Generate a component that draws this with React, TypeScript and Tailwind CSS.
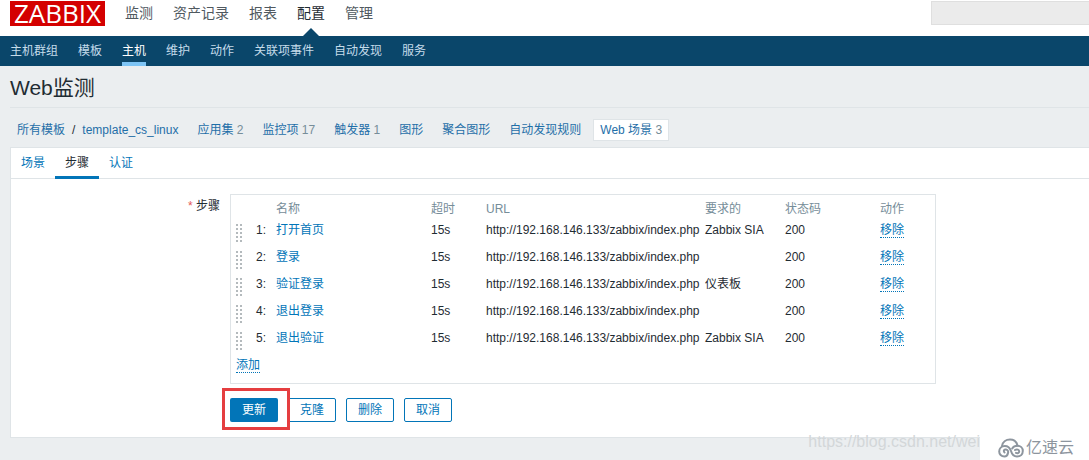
import React, { useState } from 'react';

const mainMenu = ['监测', '资产记录', '报表', '配置', '管理'];
const subMenu = ['主机群组', '模板', '主机', '维护', '动作', '关联项事件', '自动发现', '服务'];

const objectLinks = [
  { name: '应用集', count: 2 },
  { name: '监控项', count: 17 },
  { name: '触发器', count: 1 },
  { name: '图形' },
  { name: '聚合图形' },
  { name: '自动发现规则' },
  { name: 'Web 场景', count: 3 },
];

const tabs = ['场景', '步骤', '认证'];

const initialSteps = [
  { id: 1, name: '打开首页', required: 'Zabbix SIA' },
  { id: 2, name: '登录', required: '' },
  { id: 3, name: '验证登录', required: '仪表板' },
  { id: 4, name: '退出登录', required: '' },
  { id: 5, name: '退出验证', required: 'Zabbix SIA' },
];

const STEP_URL = 'http://192.168.146.133/zabbix/index.php';

const DragHandle: React.FC = () => (
  <svg width="6" height="18" viewBox="0 0 6 18" fill="#b4babd" className="mt-[7px] block cursor-move">
    {[0, 4, 8, 12, 16].map((y) => (
      <g key={y}>
        <rect x="0" y={y} width="2" height="2" />
        <rect x="4" y={y} width="2" height="2" />
      </g>
    ))}
  </svg>
);

const Header: React.FC = () => (
  <header>
    <div className="flex h-9 items-start justify-between bg-white pl-2.5 pt-px">
      <div className="flex">
        <a
          href="#"
          className="flex h-[25px] w-[95px] justify-center bg-[#d40000] font-['Open_Sans',sans-serif] text-[26px] leading-[25px] text-white"
        >
          ZABBIX
        </a>
        <nav className="ml-5 flex gap-5 text-sm leading-6 text-[#50595f]">
          {mainMenu.map((item) => (
            <a key={item} href="#" className={item === '配置' ? 'relative h-[35px] text-[#1f2c33]' : 'h-[35px]'}>
              {item}
              {item === '配置' && (
                <svg width="16" height="8" viewBox="0 0 16 8" className="absolute bottom-0 left-1.5">
                  <path d="M0 8 8 0l8 8z" fill="#0a466a" />
                </svg>
              )}
            </a>
          ))}
        </nav>
      </div>
      <input
        type="text"
        aria-label="搜索"
        className="h-6 w-[158px] border border-r-0 border-[#dfdfdf] bg-[#ebebeb] px-2 outline-none"
      />
    </div>
    <nav className="flex h-[30px] gap-5 bg-[#0a466a] px-2.5 leading-[30px] text-[#c5dcea]">
      {subMenu.map((item) => (
        <a key={item} href="#" className={item === '主机' ? 'border-b-4 border-[#7dc4f5] text-white' : ''}>
          {item}
        </a>
      ))}
    </nav>
  </header>
);

const Breadcrumbs: React.FC = () => (
  <nav className="flex gap-[5px] pt-[11px] pb-1.5 pl-2.5 leading-5 text-[#1f6fa8]">
    <div className="flex gap-[7px] border border-transparent px-1.5">
      <a href="#">所有模板</a>
      <span className="text-[#1f2c33]">/</span>
      <a href="#">template_cs_linux</a>
    </div>
    {objectLinks.map(({ name, count }) => (
      <div
        key={name}
        className={
          name === 'Web 场景' ? 'border border-[#dfe4e7] bg-white px-1.5' : 'border border-transparent px-1.5'
        }
      >
        <a href="#">{name}</a>
        {count && <span className="text-[#768d99]"> {count}</span>}
      </div>
    ))}
  </nav>
);

const ActionLink: React.FC<{ label: string; onClick?: () => void }> = ({ label, onClick }) => (
  <button
    type="button"
    onClick={onClick}
    className="mt-[7px] block border-b border-dotted border-[#0275b8] leading-[13px] text-[#0275b8]"
  >
    {label}
  </button>
);

const StepsTable: React.FC = () => {
  const [steps, setSteps] = useState(initialSteps);

  return (
    <div className="w-[706px] border border-[#dfe4e7] px-[5px] py-1">
      <table className="w-full table-fixed text-left">
        <thead>
          <tr className="h-[18px] align-bottom text-[#768d99]">
            <th className="w-5" />
            <th className="w-5" />
            <th className="w-[155px] font-normal">名称</th>
            <th className="w-[55px] font-normal">超时</th>
            <th className="w-[219px] font-normal">URL</th>
            <th className="w-20 font-normal">要求的</th>
            <th className="w-[95px] font-normal">状态码</th>
            <th className="font-normal">动作</th>
          </tr>
        </thead>
        <tbody>
          {steps.map((step) => (
            <tr key={step.id} className="h-[27px] align-top leading-[27px]">
              <td><DragHandle /></td>
              <td>{step.id}:</td>
              <td><a href="#" className="text-[#0275b8]">{step.name}</a></td>
              <td>15s</td>
              <td className="whitespace-nowrap">{STEP_URL}</td>
              <td>{step.required}</td>
              <td>200</td>
              <td>
                <ActionLink label="移除" onClick={() => setSteps(steps.filter((s) => s.id !== step.id))} />
              </td>
            </tr>
          ))}
          <tr className="h-[27px] align-top">
            <td colSpan={8}>
              <ActionLink label="添加" />
            </td>
          </tr>
        </tbody>
      </table>
    </div>
  );
};

const Watermark: React.FC = () => (
  <div className="pointer-events-none absolute right-0 bottom-0 flex items-end">
    <span className="pb-2 text-base leading-5 whitespace-nowrap text-[#d3d7d9]">https://blog.csdn.net/wei</span>
    <span className="flex h-6 w-[109px] items-center gap-0.5 bg-white pl-[18px] text-base text-[#8d959e]">
      <svg width="26" height="20" viewBox="0 0 26 20" fill="none" stroke="#8d959e" strokeWidth="2" strokeLinecap="round">
        <path d="M6.500 14.500C5 12.500 6.500 11.200 8 11.500C10 12 10.500 13.500 10 15C9.500 17.500 8 18.500 6.500 18.500C3.200 18.500 1.200 16.200 1.200 13.500C1.200 10.500 3.500 8 6.800 8C10.500 8 12 10 13 13C14 16.500 16 18.500 19 18.500C22.500 18.500 24.800 16.200 24.800 13C24.800 10 22.500 7.800 19.500 7.800C17 7.800 15.200 8.800 14.200 10.500" />
        <path d="M4 8C4.500 4 8 1.500 12 1.500C15.500 1.500 18.500 3.500 19.500 7.500" />
        <path d="M17 12C19 10.800 21.200 11.800 21.200 13.500C21.200 15.200 19.500 15.500 18 14.800" />
      </svg>
      亿速云
    </span>
  </div>
);

const App: React.FC = () => {
  const [activeTab, setActiveTab] = useState('步骤');

  return (
    <div className="relative min-h-screen bg-[#ebeef0] font-['Liberation_Sans','Noto_Sans_CJK_SC',sans-serif] text-xs text-[#1f2c33]">
      <Header />
      <h1 className="ml-2.5 h-[42px] border-b border-[#dfe4e7] text-[21px] leading-[44px]">Web监测</h1>
      <Breadcrumbs />

      <main className="ml-2.5 border border-r-0 border-[#dfe4e7] bg-white pb-[15px]">
        <div className="flex h-[31px] border-b border-[#dfe4e7]">
          {tabs.map((tab) => (
            <button
              key={tab}
              type="button"
              onClick={() => setActiveTab(tab)}
              className={
                tab === activeTab
                  ? 'h-[31px] border-b-3 border-[#0275b8] px-2.5 pt-0.5 text-[#1f2c33]'
                  : 'h-[31px] border-b-3 border-transparent px-2.5 pt-0.5 text-[#0275b8]'
              }
            >
              {tab}
            </button>
          ))}
        </div>

        <form className="flex gap-2.5 pt-[15px]" onSubmit={(e) => e.preventDefault()}>
          <div className="w-[209px] shrink-0 text-right leading-6">
            <span className="text-[#e45959]">*</span> 步骤
          </div>
          <div>
            <StepsTable />
            <div className="relative mt-[14px] flex gap-2.5">
              <button type="submit" className="h-6 w-12 rounded-xs bg-[#0275b8] text-white">
                更新
              </button>
              {['克隆', '删除', '取消'].map((label) => (
                <button
                  key={label}
                  type="button"
                  className="h-6 w-12 rounded-xs border border-[#0275b8] bg-white text-[#0275b8]"
                >
                  {label}
                </button>
              ))}
              <div className="pointer-events-none absolute -top-2.5 -left-2 h-[42px] w-[68px] border-3 border-[#e53e40]" />
            </div>
          </div>
        </form>
      </main>

      <Watermark />
    </div>
  );
};

export default App;
